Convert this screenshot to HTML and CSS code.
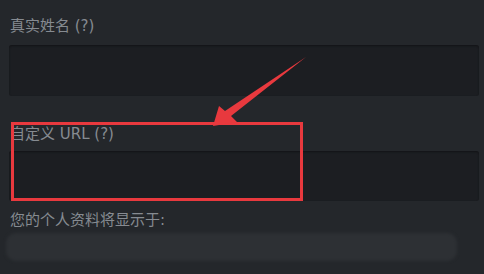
FILE: index.html
```html
<!DOCTYPE html>
<html lang="zh">
<head>
<meta charset="utf-8">
<link rel="stylesheet" href="styles.css">
</head>
<body>
<div class="page">
  <div class="label first">真实姓名 (?)</div>
  <div class="field"></div>
  <div class="label second">自定义 URL (?)</div>
  <div class="field narrow"></div>
  <div class="label third">您的个人资料将显示于:</div>
  <div class="blurred"></div>
</div>
<div class="highlight"></div>
<svg class="arrow" width="484" height="274" viewBox="0 0 484 274">
  <polygon points="306,57 225,111 219,106 213,126 237,122 231,116" fill="#e8393e"/>
</svg>
</body>
</html>
```
FILE: styles.css
```css
html, body {
  margin: 0;
  padding: 0;
  background: #24272b;
  width: 484px;
  height: 274px;
  overflow: hidden;
}
body {
  position: relative;
  font-family: "DejaVu Sans", "Noto Sans CJK SC", sans-serif;
}
.page {
  padding: 16px 5px 0 9px;
  display: flex;
  flex-direction: column;
}
.label {
  font-size: 15px;
  line-height: 20px;
  color: #868b91;
  margin-left: 1px;
}
.label.first { margin-bottom: 9px; }
.label.second { margin-top: 28px; margin-bottom: 7px; }
.label.third { margin-top: 9px; }
.field {
  height: 51px;
  background: #1c1e22;
  border-radius: 3px;
  box-shadow: inset 0 1px 2px #121316;
}
.field.narrow { height: 50px; }
.blurred {
  margin: 3px 22px 0 -3px;
  height: 28px;
  background: #2d3034;
  border-radius: 10px;
  filter: blur(1.5px);
}
.highlight {
  position: absolute;
  left: 11px;
  top: 122px;
  width: 286px;
  height: 73px;
  border: 3px solid #e8393e;
}
.arrow {
  position: absolute;
  left: 0;
  top: 0;
}
```
